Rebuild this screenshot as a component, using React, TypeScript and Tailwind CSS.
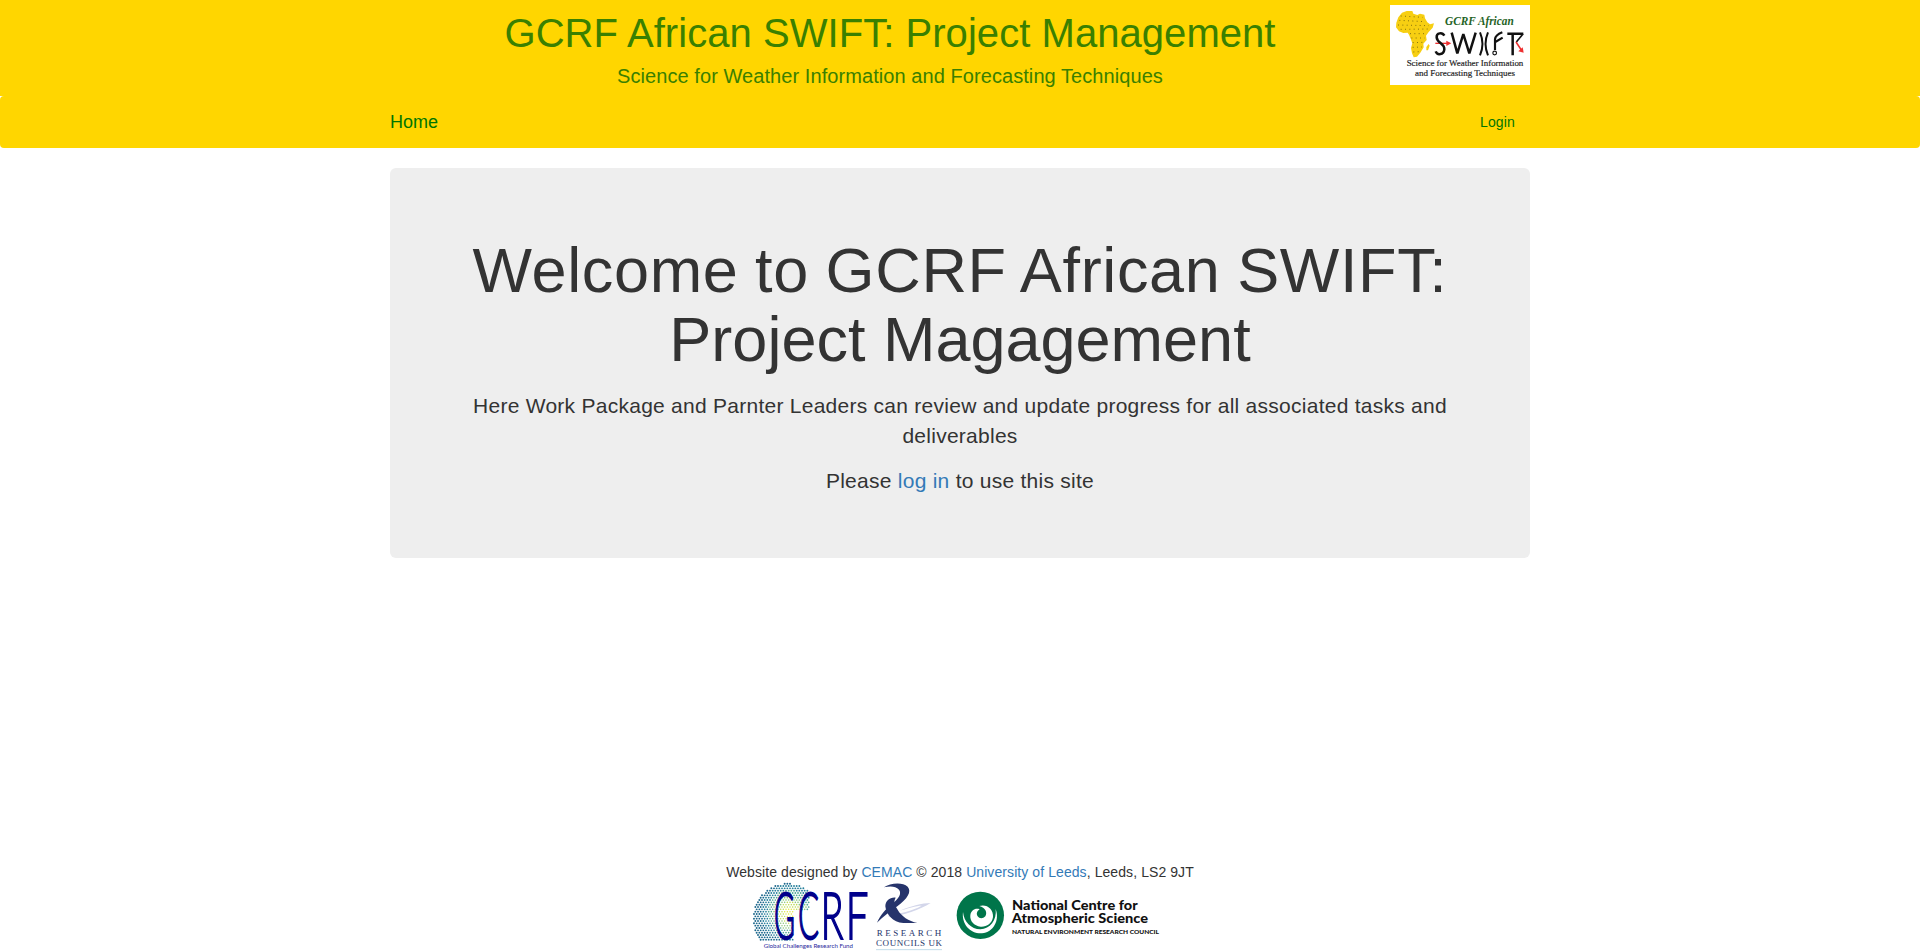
import type { ReactNode } from 'react';

function SwiftLogo() {
  return (
    <svg className="mt-[5px] h-20 w-[140px] shrink-0 bg-white" viewBox="30 15 420 240" role="img" aria-label="GCRF African SWIFT">
      <path
        d="M66 38 80 33 97 33 100 41 112 45 120 41 133 44 135 55 142 67 150 73 162 70 158 83 146 96 138 107 140 120 130 131 131 142 121 158 111 170 101 172 96 160 93 144 97 130 92 116 87 104 83 98 70 99 57 94 48 82 49 68 55 52ZM146 132 149 137 144 151 139 151 139 141Z"
        fill="#f7cf12"
      />
      <g fill="none" stroke="#5d4f0c" strokeWidth="2.6" strokeDasharray="3 10" opacity="0.85">
        <path d="M62 48 128 52M58 61 136 65M54 75 146 77M62 88 150 87M90 101 138 101M94 114 134 114M98 128 130 127M98 142 126 141M100 156 120 155" />
      </g>
      <text x="195" y="76" textLength="206" lengthAdjust="spacingAndGlyphs" fontSize="37" className="fill-[#1f6326] font-['Liberation_Serif'] font-bold italic">
        GCRF African
      </text>
      <path d="M166 130H204" stroke="#ee3030" strokeWidth="4" />
      <path d="M199 122 214 130 199 138Z" fill="#ee3030" />
      <g fill="none" stroke="#111" strokeWidth="7.5">
        <path d="M193 107C187 96 169 98 170 112C171 130 194 128 193 148C191 165 172 167 167 154" />
        <path d="M215 98 232 160 250 102 268 160 287 98" strokeLinejoin="bevel" />
        <path d="M300 97C309 118 309 145 300 166M324 97C315 118 315 145 324 166" strokeWidth="6" />
        <path d="M345 150V118Q346 105 367 97M346 126 368 113" strokeWidth="6.5" />
        <circle cx="344" cy="159" r="5.5" strokeWidth="3.5" />
        <path d="M382 101H430M398 101V166" />
        <path d="M429 102 409 126" strokeWidth="5" />
      </g>
      <path d="M408 126 424 150" fill="none" stroke="#ee3030" strokeWidth="4.5" />
      <path d="M431 158 415 154 428 142Z" fill="#ee3030" />
      <text x="80" y="199" textLength="350" lengthAdjust="spacingAndGlyphs" fontSize="26" stroke="#222" strokeWidth="0.5" className="fill-[#222] font-['Liberation_Serif']">
        Science for Weather Information
      </text>
      <text x="105" y="228" textLength="300" lengthAdjust="spacingAndGlyphs" fontSize="26" stroke="#222" strokeWidth="0.5" className="fill-[#222] font-['Liberation_Serif']">
        and Forecasting Techniques
      </text>
    </svg>
  );
}

const DOT_COLORS = ['#e3e83c', '#bddb50', '#8ac77c', '#4fa896', '#28809c', '#1c678c'];

function halftoneDots() {
  const dots: { x: number; y: number; r: number; fill: string }[] = [];
  for (let row = 0; row < 25; row++) {
    for (let col = 0; col < 24; col++) {
      const x = 38 + col * 8 + (row % 2) * 4;
      const y = 68 + row * 7;
      const disc = Math.hypot(x - 143, y - 171);
      if (disc > 104 || x > 208 || (x > 160 && y > 150) || y > 238) continue;
      const core = Math.hypot(x - 150, y - 155);
      const level = Math.min(5, Math.floor(core / 17));
      dots.push({ x, y, r: 2 + (disc / 103) * 0.9, fill: DOT_COLORS[level] });
    }
  }
  return dots;
}

const LETTERS = [
  { ch: 'G', x: 102, w: 63 },
  { ch: 'C', x: 174, w: 63 },
  { ch: 'R', x: 242, w: 68 },
  { ch: 'F', x: 317, w: 68 },
];

function GcrfLogo() {
  return (
    <svg className="h-[69px] w-[120px]" viewBox="33 63 360 207" role="img" aria-label="GCRF">
      {halftoneDots().map((d) => (
        <circle key={`${d.x}-${d.y}`} cx={d.x} cy={d.y} r={d.r} fill={d.fill} />
      ))}
      {LETTERS.map((l) => (
        <text key={l.ch} x={l.x} y="235" textLength={l.w} lengthAdjust="spacingAndGlyphs" fontSize="196" stroke="#00008b" strokeWidth="5.5" className="fill-[#00008b] font-['Lato'] font-light">
          {l.ch}
        </text>
      ))}
      <text x="71" y="260" textLength="268" lengthAdjust="spacingAndGlyphs" fontSize="19" className="fill-[#2a2a9c] font-['Lato']">
        Global Challenges Research Fund
      </text>
    </svg>
  );
}

function ResearchCouncilsLogo() {
  return (
    <svg className="h-[69px] w-[76px]" viewBox="393 63 228 207" role="img" aria-label="Research Councils UK">
      <path d="M446 168C490 164 540 146 572 126C548 126 508 136 478 150C500 142 530 134 545 134C515 150 480 158 446 162Z" fill="#d3d6ea" />
      <path d="M432 79C450 66 488 63 503 77C516 92 502 113 472 136C448 152 428 169 411 185C423 160 438 143 455 130C476 113 486 98 477 86C467 75 450 75 432 79Z" fill="#26346b" />
      <path d="M467 110C450 108 436 120 436 136C438 158 458 185 490 186L532 186C506 180 484 166 473 146C464 132 460 121 467 110Z" fill="#26346b" />
      <text x="410" y="226" textLength="194" fontSize="27" className="fill-[#26346b] font-['Liberation_Serif']">
        RESEARCH
      </text>
      <text x="408" y="255" textLength="198" fontSize="27" className="fill-[#26346b] font-['Liberation_Serif']">
        COUNCILS UK
      </text>
      <path d="M408 266H606" stroke="#c3dcea" strokeWidth="3" />
    </svg>
  );
}

function NcasLogo() {
  return (
    <svg className="h-[69px] w-[222px]" viewBox="21 63 666 207" role="img" aria-label="National Centre for Atmospheric Science">
      <circle cx="121" cy="163" r="71" fill="#00754a" />
      <path d="M69 153C64 190 92 219 126 217C160 214 180 178 167 144C171 178 150 204 121 205C93 204 72 183 69 153Z" fill="#fff" />
      <path d="M118 135C140 128 161 144 159 168C156 188 140 198 122 197C102 195 89 180 91 163C93 148 106 140 119 145C111 150 108 158 113 166C118 174 129 174 136 166C143 154 136 140 118 135Z" fill="#fff" />
      <text x="216" y="148" textLength="377" lengthAdjust="spacingAndGlyphs" fontSize="39" className="fill-[#111] font-['Lato'] font-black">
        National Centre for
      </text>
      <text x="215" y="185" textLength="409" lengthAdjust="spacingAndGlyphs" fontSize="39" className="fill-[#111] font-['Lato'] font-black">
        Atmospheric Science
      </text>
      <text x="216" y="220" textLength="441" lengthAdjust="spacingAndGlyphs" fontSize="17" className="fill-[#111] font-['Lato'] font-black">
        NATURAL ENVIRONMENT RESEARCH COUNCIL
      </text>
    </svg>
  );
}

function Link({ children }: { children: ReactNode }) {
  return (
    <a href="#" className="text-[#337ab7]">
      {children}
    </a>
  );
}

export default function App() {
  return (
    <div className="flex h-screen flex-col overflow-hidden bg-white font-['Liberation_Sans',Arial,sans-serif] text-sm text-[#333]">
      <header className="h-24 shrink-0 bg-[#ffd600]">
        <div className="mx-auto flex w-[1140px] items-start">
          <div className="flex-1 pt-[11px] text-center text-[#3a8000]">
            <h1 className="text-[40px] leading-[44px] tracking-[0.05px]">GCRF African SWIFT: Project Management</h1>
            <p className="mt-2.5 text-xl leading-[22px] tracking-[0.07px]">Science for Weather Information and Forecasting Techniques</p>
          </div>
          <SwiftLogo />
        </div>
      </header>
      <nav className="h-[52px] shrink-0 rounded bg-[#ffd600] text-[#007500]">
        <div className="mx-auto flex w-[1140px] justify-between pt-4 leading-5">
          <a href="#" className="text-lg leading-5">Home</a>
          <a href="#" className="pr-[15px] tracking-[0.15px]">Login</a>
        </div>
      </nav>
      <main className="mx-auto mt-5 w-[1140px] shrink-0 rounded-md bg-[#eee] px-[60px] pt-[68px] pb-[62.4px] text-center">
        <h2 className="text-[63px] leading-[69.3px]">
          <span className="tracking-[0.65px] [word-spacing:-1.5px]">Welcome to GCRF African SWIFT:</span>
          <br />
          Project Magagement
        </h2>
        <p className="mt-4 text-[21px] leading-[30px] tracking-[0.26px]">
          Here Work Package and Parnter Leaders can review and update progress for all associated tasks and deliverables
        </p>
        <p className="mt-[15px] text-[21px] leading-[30px] tracking-[0.26px]">
          Please <Link>log in</Link> to use this site
        </p>
      </main>
      <footer className="mt-auto flex flex-col items-center">
        <p className="leading-5 tracking-[0.08px]">
          Website designed by <Link>CEMAC</Link> © 2018 <Link>University of Leeds</Link>, Leeds, LS2 9JT
        </p>
        <div className="flex">
          <GcrfLogo />
          <ResearchCouncilsLogo />
          <NcasLogo />
        </div>
      </footer>
    </div>
  );
}
